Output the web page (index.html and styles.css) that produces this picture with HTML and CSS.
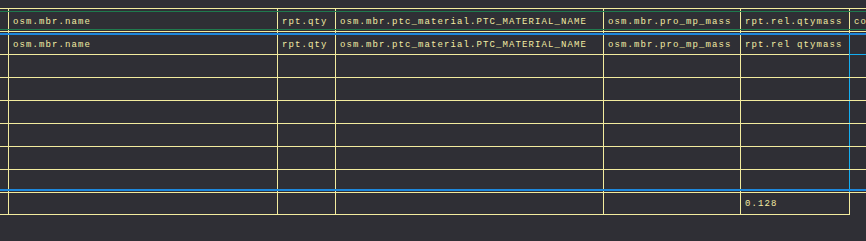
FILE: index.html
```html
<!DOCTYPE html>
<html>
<head>
<meta charset="utf-8">
<link rel="stylesheet" href="styles.css">
</head>
<body>
<div class="sheet">
  <div class="row head">
    <div class="c"></div>
    <div class="c">osm.mbr.name</div>
    <div class="c">rpt.qty</div>
    <div class="c">osm.mbr.ptc_material.PTC_MATERIAL_NAME</div>
    <div class="c">osm.mbr.pro_mp_mass</div>
    <div class="c">rpt.rel.qtymass</div>
    <div class="c">count</div>
  </div>
  <div class="row spacer top"><div class="c"></div><div class="c"></div><div class="c"></div><div class="c"></div><div class="c"></div><div class="c"></div><div class="c"></div></div>
  <div class="row data first">
    <div class="c"></div>
    <div class="c">osm.mbr.name</div>
    <div class="c">rpt.qty</div>
    <div class="c">osm.mbr.ptc_material.PTC_MATERIAL_NAME</div>
    <div class="c">osm.mbr.pro_mp_mass</div>
    <div class="c">rpt.rel qtymass</div>
    <div class="c sel"></div>
  </div>
  <div class="row data"><div class="c"></div><div class="c"></div><div class="c"></div><div class="c"></div><div class="c"></div><div class="c"></div><div class="c"></div></div>
  <div class="row data"><div class="c"></div><div class="c"></div><div class="c"></div><div class="c"></div><div class="c"></div><div class="c"></div><div class="c"></div></div>
  <div class="row data"><div class="c"></div><div class="c"></div><div class="c"></div><div class="c"></div><div class="c"></div><div class="c"></div><div class="c"></div></div>
  <div class="row data"><div class="c"></div><div class="c"></div><div class="c"></div><div class="c"></div><div class="c"></div><div class="c"></div><div class="c"></div></div>
  <div class="row data"><div class="c"></div><div class="c"></div><div class="c"></div><div class="c"></div><div class="c"></div><div class="c"></div><div class="c"></div></div>
  <div class="row data last"><div class="c"></div><div class="c"></div><div class="c"></div><div class="c"></div><div class="c"></div><div class="c"></div><div class="c"></div></div>
  <div class="row spacer bottom"><div class="c"></div><div class="c"></div><div class="c"></div><div class="c"></div><div class="c"></div><div class="c"></div><div class="c"></div></div>
  <div class="row total">
    <div class="c"></div>
    <div class="c"></div>
    <div class="c"></div>
    <div class="c"></div>
    <div class="c"></div>
    <div class="c">0.128</div>
    <div class="c"></div>
  </div>
</div>
</body>
</html>
```

FILE: styles.css
```css
html, body {
  margin: 0;
  padding: 0;
  background: #2f2f35;
  width: 866px;
  height: 241px;
  overflow: hidden;
}

.sheet {
  padding-top: 8px;
  font-family: "Liberation Mono", "DejaVu Sans Mono", monospace;
  font-size: 9px;
  letter-spacing: 1.1px;
  color: #f3eca3;
}

.row {
  display: grid;
  grid-template-columns: 8px 269px 58px 268px 137px 109px 17px;
  box-sizing: border-box;
}

.c {
  box-sizing: border-box;
  border-left: 1px solid #f3ec9e;
  padding-left: 4px;
  white-space: nowrap;
  overflow: hidden;
  display: flex;
  align-items: center;
}

.c:first-child {
  border-left: none;
  padding-left: 0;
}

.head {
  position: relative;
  border-top: 1px solid #f3ec9e;
  border-bottom: 1px solid #f3ec9e;
  height: 24px;
}

.head .c {
  padding-top: 4px;
}

.head::before,
.head::after {
  content: "";
  position: absolute;
  left: 0;
  right: 0;
  height: 1px;
  background: #1f7a4e;
}

.head::before { top: 2px; }
.head::after { top: 20px; }

.spacer.top { height: 1px; }
.spacer.bottom { height: 1px; }

.data {
  height: 23px;
  border-bottom: 1px solid #f3ec9e;
}

.data .c:last-child {
  border-left-color: #14aef0;
}

.data.first {
  border-top: 2px solid #1e88dc;
  height: 22px;
}

.data.first .c.sel {
  border-bottom: 1px solid #14aef0;
  margin-bottom: -1px;
}

.data.last {
  height: 21px;
  border-bottom: 2px solid #1e88dc;
}

.spacer.bottom .c:last-child {
  border-left-color: #14aef0;
}

.total {
  height: 23px;
  border-top: 1px solid #f3ec9e;
}

.total .c {
  border-bottom: 1px solid #f3ec9e;
}

.total .c:last-child {
  border-bottom: none;
}
```
